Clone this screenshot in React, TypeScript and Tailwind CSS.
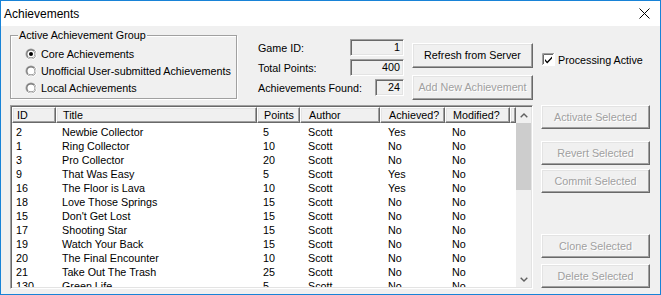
import React from "react";

interface Achievement {
  id: number;
  title: string;
  points: number;
  author: string;
  achieved: boolean;
  modified: boolean;
}

const achievements: Achievement[] = [
  { id: 2, title: "Newbie Collector", points: 5, author: "Scott", achieved: true, modified: false },
  { id: 1, title: "Ring Collector", points: 10, author: "Scott", achieved: false, modified: false },
  { id: 3, title: "Pro Collector", points: 20, author: "Scott", achieved: false, modified: false },
  { id: 9, title: "That Was Easy", points: 5, author: "Scott", achieved: true, modified: false },
  { id: 16, title: "The Floor is Lava", points: 10, author: "Scott", achieved: true, modified: false },
  { id: 18, title: "Love Those Springs", points: 15, author: "Scott", achieved: false, modified: false },
  { id: 15, title: "Don't Get Lost", points: 15, author: "Scott", achieved: false, modified: false },
  { id: 17, title: "Shooting Star", points: 15, author: "Scott", achieved: false, modified: false },
  { id: 19, title: "Watch Your Back", points: 15, author: "Scott", achieved: false, modified: false },
  { id: 20, title: "The Final Encounter", points: 10, author: "Scott", achieved: false, modified: false },
  { id: 21, title: "Take Out The Trash", points: 25, author: "Scott", achieved: false, modified: false },
  { id: 130, title: "Green Life", points: 5, author: "Scott", achieved: false, modified: false },
];

// larguras das colunas do listview, em px
const columns = [
  { label: "ID", cls: "w-[44px] pl-[4px]" },
  { label: "Title", cls: "w-[201px] pl-[6px]" },
  { label: "Points", cls: "w-[43px] pl-[6px]" },
  { label: "Author", cls: "w-[80px] pl-[8px]" },
  { label: "Achieved?", cls: "w-[65px] pl-[8px]" },
  { label: "Modified?", cls: "w-[65px] pl-[7px]" },
];

const raised =
  "border border-t-white border-l-white border-r-[#696969] border-b-[#696969] shadow-[inset_-1px_-1px_0_#a0a0a0,inset_1px_1px_0_#e3e3e3]";
const sunken =
  "border border-t-[#a0a0a0] border-l-[#a0a0a0] border-r-white border-b-white shadow-[inset_1px_1px_0_#696969,inset_-1px_-1px_0_#e3e3e3]";

function Button({ label, disabled, className }: { label: string; disabled?: boolean; className: string }) {
  return (
    <div
      className={`${raised} ${className} bg-[#f0f0f0] flex items-center justify-center leading-[13px] ${
        disabled ? "text-[#a0a0a0] [text-shadow:1px_1px_0_#ffffff]" : "text-black"
      }`}
    >
      {label}
    </div>
  );
}

function Radio({ label, checked }: { label: string; checked?: boolean }) {
  return (
    <div className="flex items-center h-[17px] gap-[4px]">
      <svg width="12" height="12" viewBox="0 0 12 12">
        <circle cx="6" cy="6" r="5.5" fill="#a0a0a0" />
        <path d="M1.8 10.2 A5.5 5.5 0 0 0 10.2 1.8" fill="none" stroke="#ffffff" strokeWidth="1" />
        <circle cx="6" cy="6" r="4.5" fill="#696969" />
        <path d="M2.8 9.2 A4.5 4.5 0 0 0 9.2 2.8" fill="none" stroke="#e3e3e3" strokeWidth="1" />
        <circle cx="6" cy="6" r="3.6" fill="#ffffff" />
        {checked && <circle cx="6" cy="6" r="2" fill="#000000" />}
      </svg>
      <span>{label}</span>
    </div>
  );
}

function Field({ label, value, width }: { label: string; value: string; width: string }) {
  return (
    <div className="flex items-center justify-between h-[17px]">
      <span>{label}</span>
      <div className={`${sunken} ${width} h-[17px] bg-[#f0f0f0] flex items-center justify-end pr-[3px] leading-[13px]`}>
        {value}
      </div>
    </div>
  );
}

export default function App() {
  return (
    <div className="w-[661px] h-[295px] border border-[#1883d7] bg-[#f0f0f0] flex flex-col overflow-hidden font-['Liberation_Sans',Arial,sans-serif] text-[10.75px] text-black leading-[14px]">
      {/* barra de título */}
      <div className="h-[25px] shrink-0 bg-white flex items-center justify-between pl-[3px] pr-[10px]">
        <span className="text-[12px]">Achievements</span>
        <svg width="11" height="11" viewBox="0 0 11 11">
          <path d="M0.5 0.5 L10.5 10.5 M10.5 0.5 L0.5 10.5" stroke="#000000" strokeWidth="1" />
        </svg>
      </div>

      {/* parte de cima */}
      <div className="flex h-[79px] shrink-0">
        <div className="ml-[9px] mt-[9px] w-[227px] h-[64px] border border-[#a0a0a0] shadow-[1px_1px_0_#ffffff,inset_1px_1px_0_#ffffff]">
          <div className="-mt-[8px] ml-[7px] w-fit px-[1px] bg-[#f0f0f0]">Active Achievement Group</div>
          <div className="ml-[14px] mt-[3px] flex flex-col">
            <Radio label="Core Achievements" checked />
            <Radio label="Unofficial User-submitted Achievements" />
            <Radio label="Local Achievements" />
          </div>
        </div>

        <div className="ml-[21px] mt-[13px] w-[146px] flex flex-col gap-[3px]">
          <Field label="Game ID:" value="1" width="w-[54px]" />
          <Field label="Total Points:" value="400" width="w-[54px]" />
          <Field label="Achievements Found:" value="24" width="w-[29px]" />
        </div>

        <div className="ml-[8px] mt-[17px] flex flex-col gap-[7px]">
          <Button label="Refresh from Server" className="w-[121px] h-[25px]" />
          <Button label="Add New Achievement" disabled className="w-[121px] h-[25px]" />
        </div>

        <div className="ml-[9px] mt-[27px] h-[13px] flex items-center gap-[3px]">
          <svg width="13" height="13" viewBox="0 0 13 13">
            <rect x="0" y="0" width="13" height="13" fill="#ffffff" />
            <path d="M0.5 12 V0.5 H12" fill="none" stroke="#a0a0a0" />
            <path d="M1.5 11 V1.5 H11" fill="none" stroke="#696969" />
            <path d="M0.5 12.5 H12.5 V0.5" fill="none" stroke="#ffffff" />
            <path d="M3 6 L5.2 8.4 L10 3.6 L10 5.6 L5.2 10.4 L3 8 Z" fill="#000000" />
          </svg>
          <span>Processing Active</span>
        </div>
      </div>

      {/* lista + botões */}
      <div className="flex flex-1 min-h-0">
        <div className={`${sunken} ml-[9px] w-[523px] h-[184px] p-[1px] bg-white flex overflow-hidden`}>
          <div className="flex-1 flex flex-col min-w-0 overflow-hidden">
            <div className="flex h-[16px] shrink-0 bg-[#f0f0f0]">
              {columns.map((c) => (
                <div key={c.label} className={`${raised} ${c.cls} h-[16px] flex items-center`}>
                  {c.label}
                </div>
              ))}
              <div className={`${raised} flex-1 h-[16px]`} />
            </div>
            <div className="pt-[2px]">
              {achievements.map((a) => (
                <div key={a.id} className="flex h-[14px] items-center">
                  <div className={columns[0].cls}>{a.id}</div>
                  <div className={columns[1].cls}>{a.title}</div>
                  <div className={columns[2].cls}>{a.points}</div>
                  <div className={columns[3].cls}>{a.author}</div>
                  <div className={columns[4].cls}>{a.achieved ? "Yes" : "No"}</div>
                  <div className={columns[5].cls}>{a.modified ? "Yes" : "No"}</div>
                </div>
              ))}
            </div>
          </div>

          {/* barra de rolagem */}
          <div className="w-[15px] shrink-0 bg-[#f0f0f0] flex flex-col">
            <div className="h-[16px] flex items-center justify-center">
              <svg width="8" height="5" viewBox="0 0 8 5">
                <path d="M0.7 4.3 L4 1 L7.3 4.3" fill="none" stroke="#606060" strokeWidth="1.4" />
              </svg>
            </div>
            <div className="h-[67px] bg-[#cdcdcd]" />
            <div className="flex-1" />
            <div className="h-[16px] flex items-center justify-center">
              <svg width="8" height="5" viewBox="0 0 8 5">
                <path d="M0.7 0.7 L4 4 L7.3 0.7" fill="none" stroke="#606060" strokeWidth="1.4" />
              </svg>
            </div>
          </div>
        </div>

        <div className="ml-[8px] flex flex-col">
          <Button label="Activate Selected" disabled className="w-[109px] h-[24px]" />
          <Button label="Revert Selected" disabled className="w-[109px] h-[24px] mt-[12px]" />
          <Button label="Commit Selected" disabled className="w-[109px] h-[24px] mt-[4px]" />
          <Button label="Clone Selected" disabled className="w-[109px] h-[24px] mt-[41px]" />
          <Button label="Delete Selected" disabled className="w-[109px] h-[24px] mt-[6px]" />
        </div>
      </div>
    </div>
  );
}
